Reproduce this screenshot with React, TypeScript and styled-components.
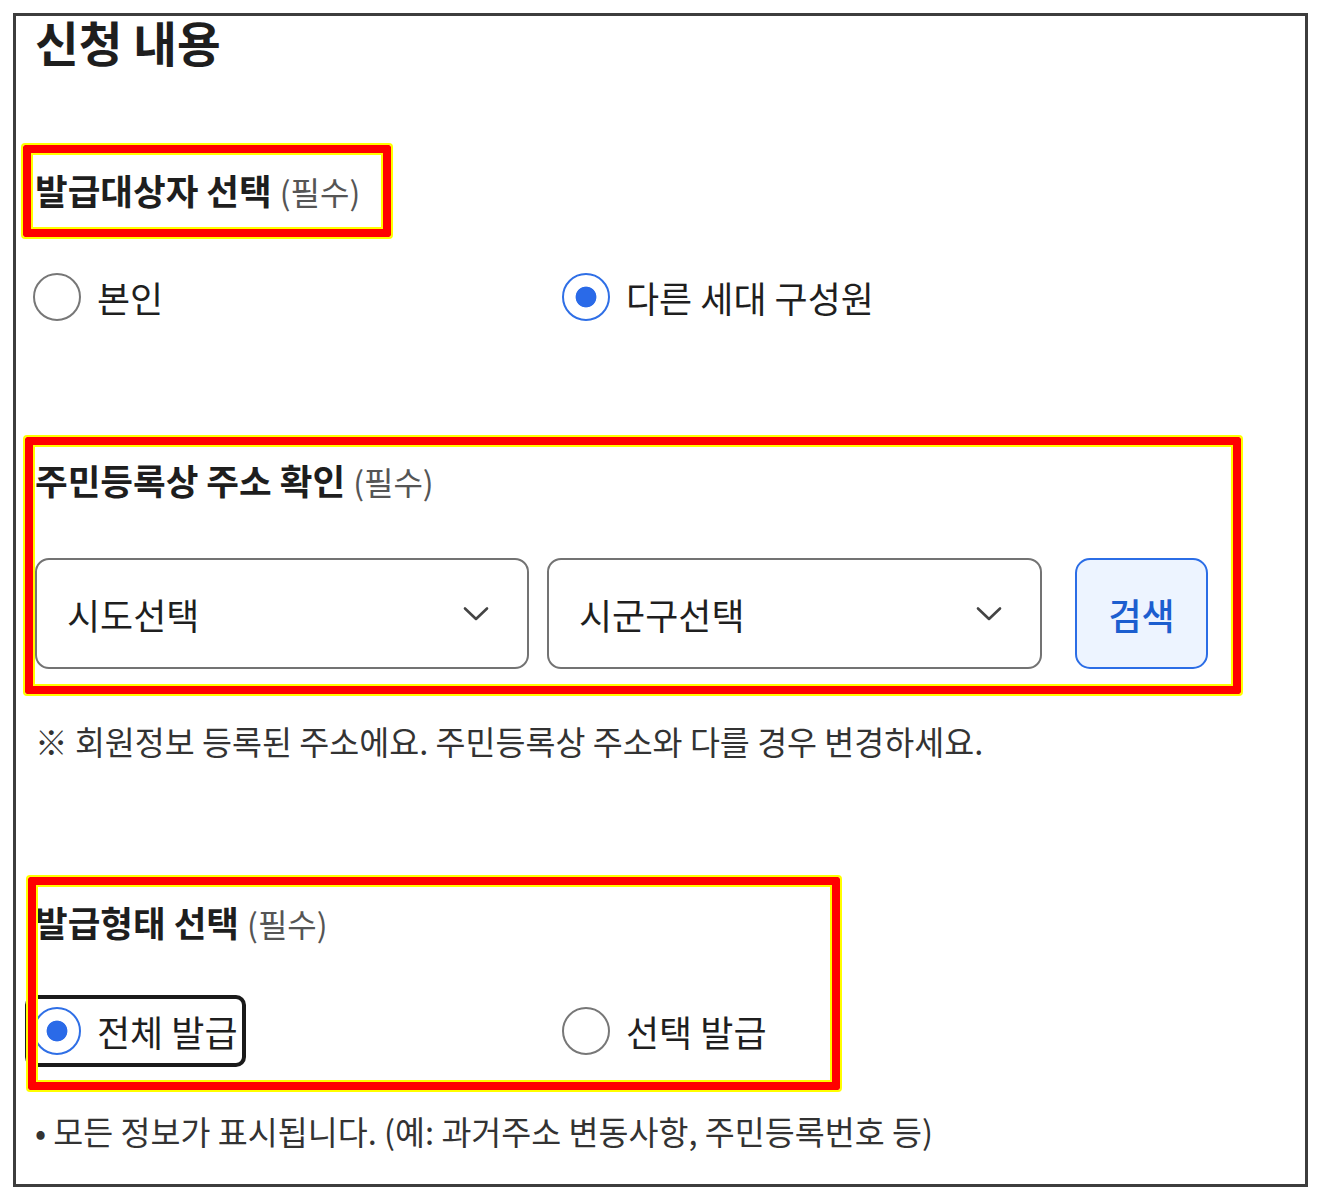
import React from "react";
import styled, { createGlobalStyle, css } from "styled-components";

const GlobalStyle = createGlobalStyle`
  html, body {
    margin: 0;
    padding: 0;
    background: #ffffff;
  }
  body {
    font-family: "Noto Sans CJK KR", "Noto Sans", sans-serif;
    color: #1f1f1f;
  }
  *, *::before, *::after {
    box-sizing: border-box;
  }
`;

const Frame = styled.section`
  margin: 13px 0 0 13px;
  width: 1295px;
  height: 1174px;
  border: 3px solid #3d3d3d;
  padding: 0 0 0 19px;
  display: flex;
  flex-direction: column;
  align-items: flex-start;
`;

const PageTitle = styled.h2`
  margin: 0;
  font-size: 47.5px;
  font-weight: 700;
  line-height: 52px;
  color: #1e1e1e;
  letter-spacing: 0;
`;

type HighlightProps = {
  $mt: number;
  $top: number;
  $left: number;
  $w: number;
  $h: number;
};

const Highlight = styled.div<HighlightProps>`
  position: relative;
  margin-top: ${(p) => p.$mt}px;
  &::after {
    content: "";
    position: absolute;
    top: ${(p) => p.$top}px;
    left: ${(p) => p.$left}px;
    width: ${(p) => p.$w}px;
    height: ${(p) => p.$h}px;
    border: 8px solid #ff0000;
    outline: 2px solid #ffff00;
    box-shadow: inset 0 0 0 2px #ffff00;
    border-radius: 2px;
    pointer-events: none;
    z-index: 2;
  }
`;

const FieldTitle = styled.h3`
  margin: 0;
  height: 40px;
  font-size: 35.5px;
  font-weight: 700;
  line-height: 40px;
  color: #1e1e1e;
  white-space: nowrap;
`;

const Required = styled.span`
  font-size: 32px;
  font-weight: 400;
  line-height: 1;
  color: #555555;
`;

const RadioGroup = styled.div<{ $mt: number }>`
  display: grid;
  grid-template-columns: 529px auto;
  margin: ${(p) => p.$mt}px 0 0 -2px;
`;

const RadioOption = styled.label<{ $focused?: boolean }>`
  justify-self: start;
  display: inline-flex;
  align-items: center;
  gap: 16px;
  height: 56px;
  padding: 4px 0;
  font-size: 36px;
  line-height: 48px;
  color: #1f1f1f;
  border-radius: 2px;
  cursor: pointer;
  ${(p) =>
    p.$focused &&
    css`
      outline: 4px solid #1a1a1a;
      outline-offset: 4px;
    `}
`;

const RadioInput = styled.input.attrs({ type: "radio" })`
  appearance: none;
  -webkit-appearance: none;
  margin: 0;
  flex: none;
  width: 48px;
  height: 48px;
  border-radius: 50%;
  border: 2px solid #777777;
  background: #ffffff;
  &:checked {
    border-color: #2f6fe6;
    background: radial-gradient(circle at center, #2a6ae8 0 10px, #ffffff 10.8px);
  }
  &:focus {
    outline: none;
  }
`;

const AddressRow = styled.div`
  display: flex;
  align-items: stretch;
  gap: 18px;
  margin-top: 58px;
  height: 111px;
`;

const SelectWrap = styled.div<{ $w: number }>`
  width: ${(p) => p.$w}px;
  height: 111px;
  border: 2px solid #737373;
  border-radius: 14px;
  display: flex;
  align-items: center;
  padding: 0 38px 0 30px;
  color: #444444;
`;

const NativeSelect = styled.select`
  appearance: none;
  -webkit-appearance: none;
  flex: 1;
  min-width: 0;
  border: none;
  background: transparent;
  padding: 0;
  margin: 0;
  font-family: inherit;
  font-size: 36px;
  line-height: 48px;
  color: #1f1f1f;
  outline: none;
`;

const Chevron = styled.svg`
  flex: none;
  width: 26px;
  height: 16px;
`;

const SearchButton = styled.button`
  margin-left: 15px;
  width: 133px;
  height: 111px;
  border: 2px solid #2b6de6;
  border-radius: 15px;
  background: #edf4ff;
  font-family: inherit;
  font-size: 36px;
  font-weight: 500;
  color: #1c5ecf;
  padding: 0;
  cursor: pointer;
`;

const Note = styled.p<{ $mt: number }>`
  margin: ${(p) => p.$mt}px 0 0;
  font-size: 32.6px;
  line-height: 40px;
  color: #333333;
  white-space: nowrap;
`;

const ChevronIcon = () => (
  <Chevron viewBox="0 0 26 16" aria-hidden="true">
    <polyline
      points="2,2.5 13,13 24,2.5"
      fill="none"
      stroke="#444444"
      strokeWidth="2.6"
      strokeLinecap="round"
      strokeLinejoin="round"
    />
  </Chevron>
);

export default function App() {
  return (
    <>
      <GlobalStyle />
      <Frame>
        <PageTitle>신청 내용</PageTitle>

        <Highlight $mt={102} $top={-25} $left={-12} $w={368} $h={92}>
          <FieldTitle>
            발급대상자 선택 <Required>(필수)</Required>
          </FieldTitle>
        </Highlight>

        <RadioGroup $mt={59} role="radiogroup">
          <RadioOption>
            <RadioInput name="target" value="self" />
            본인
          </RadioOption>
          <RadioOption>
            <RadioInput name="target" value="member" defaultChecked />
            다른 세대 구성원
          </RadioOption>
        </RadioGroup>

        <Highlight $mt={135} $top={-23} $left={-10} $w={1216} $h={257}>
          <FieldTitle>
            주민등록상 주소 확인 <Required>(필수)</Required>
          </FieldTitle>
          <AddressRow>
            <SelectWrap $w={494}>
              <NativeSelect defaultValue="">
                <option value="">시도선택</option>
              </NativeSelect>
              <ChevronIcon />
            </SelectWrap>
            <SelectWrap $w={495}>
              <NativeSelect defaultValue="">
                <option value="">시군구선택</option>
              </NativeSelect>
              <ChevronIcon />
            </SelectWrap>
            <SearchButton type="button">검색</SearchButton>
          </AddressRow>
        </Highlight>

        <Note $mt={52}>※ 회원정보 등록된 주소에요. 주민등록상 주소와 다를 경우 변경하세요.</Note>

        <Highlight $mt={141} $top={-25} $left={-7} $w={812} $h={213}>
          <FieldTitle>
            발급형태 선택 <Required>(필수)</Required>
          </FieldTitle>
          <RadioGroup $mt={61} role="radiogroup">
            <RadioOption $focused>
              <RadioInput name="type" value="all" defaultChecked />
              전체 발급
            </RadioOption>
            <RadioOption>
              <RadioInput name="type" value="partial" />
              선택 발급
            </RadioOption>
          </RadioGroup>
        </Highlight>

        <Note $mt={52}>• 모든 정보가 표시됩니다. (예: 과거주소 변동사항, 주민등록번호 등)</Note>
      </Frame>
    </>
  );
}
